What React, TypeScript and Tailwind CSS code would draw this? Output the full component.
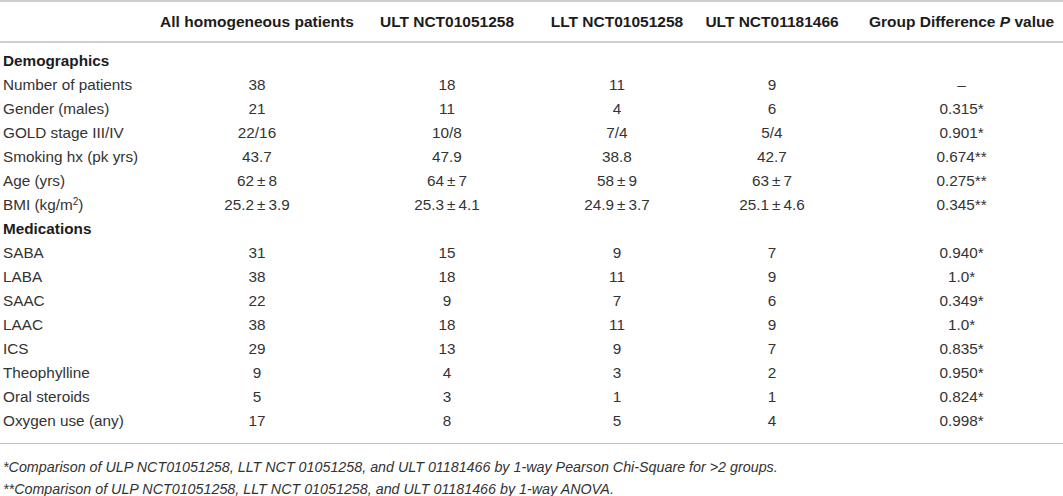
import React from "react";

type Row = { label: React.ReactNode; values?: string[]; section?: boolean };

const pm = (a: string, b: string) => `${a}\u2009±\u2009${b}`;

const rows: Row[] = [
  { label: "Demographics", section: true },
  { label: "Number of patients", values: ["38", "18", "11", "9", "–"] },
  { label: "Gender (males)", values: ["21", "11", "4", "6", "0.315*"] },
  { label: "GOLD stage III/IV", values: ["22/16", "10/8", "7/4", "5/4", "0.901*"] },
  { label: "Smoking hx (pk yrs)", values: ["43.7", "47.9", "38.8", "42.7", "0.674**"] },
  { label: "Age (yrs)", values: [pm("62", "8"), pm("64", "7"), pm("58", "9"), pm("63", "7"), "0.275**"] },
  {
    label: (
      <>
        BMI (kg/m<sup className="text-[10px]">2</sup>)
      </>
    ),
    values: [pm("25.2", "3.9"), pm("25.3", "4.1"), pm("24.9", "3.7"), pm("25.1", "4.6"), "0.345**"],
  },
  { label: "Medications", section: true },
  { label: "SABA", values: ["31", "15", "9", "7", "0.940*"] },
  { label: "LABA", values: ["38", "18", "11", "9", "1.0*"] },
  { label: "SAAC", values: ["22", "9", "7", "6", "0.349*"] },
  { label: "LAAC", values: ["38", "18", "11", "9", "1.0*"] },
  { label: "ICS", values: ["29", "13", "9", "7", "0.835*"] },
  { label: "Theophylline", values: ["9", "4", "3", "2", "0.950*"] },
  { label: "Oral steroids", values: ["5", "3", "1", "1", "0.824*"] },
  { label: "Oxygen use (any)", values: ["17", "8", "5", "4", "0.998*"] },
];

const grid = "grid grid-cols-[158px_198px_182px_158px_152px_1fr]";

export default function App() {
  return (
    <div className="w-[1063px] h-[496px] bg-white text-[#333] font-['Liberation_Sans',Arial,sans-serif] overflow-hidden">
      <div className={`${grid} h-[43px] items-center border-t-2 border-b-2 border-[#cfcfcf] text-[15.5px] font-bold text-[#1c1c1c]`}>
        <div />
        <div className="text-center">All homogeneous patients</div>
        <div className="text-center">ULT NCT01051258</div>
        <div className="text-center">LLT NCT01051258</div>
        <div className="text-center">ULT NCT01181466</div>
        <div className="text-center pl-[12px]">
          Group Difference <i>P</i> value
        </div>
      </div>

      <div className="pt-[6px] pb-[10px] border-b border-[#bdbdbd] text-[15.3px]">
        {rows.map((r, i) => (
          <div key={i} className={`${grid} h-[24px] items-center`}>
            <div className={`pl-[3px] whitespace-nowrap ${r.section ? "font-bold text-[#1c1c1c]" : ""}`}>{r.label}</div>
            {r.values?.map((v, j) => (
              <div key={j} className={`text-center whitespace-nowrap ${j === 4 ? "pl-[12px]" : ""}`}>
                {v}
              </div>
            ))}
          </div>
        ))}
      </div>

      <div className="pt-[12px] pl-[3px] text-[14.3px] italic leading-[22px] text-[#333]">
        <div>*Comparison of ULP NCT01051258, LLT NCT 01051258, and ULT 01181466 by 1-way Pearson Chi-Square for &gt;2 groups.</div>
        <div>**Comparison of ULP NCT01051258, LLT NCT 01051258, and ULT 01181466 by 1-way ANOVA.</div>
      </div>
    </div>
  );
}
